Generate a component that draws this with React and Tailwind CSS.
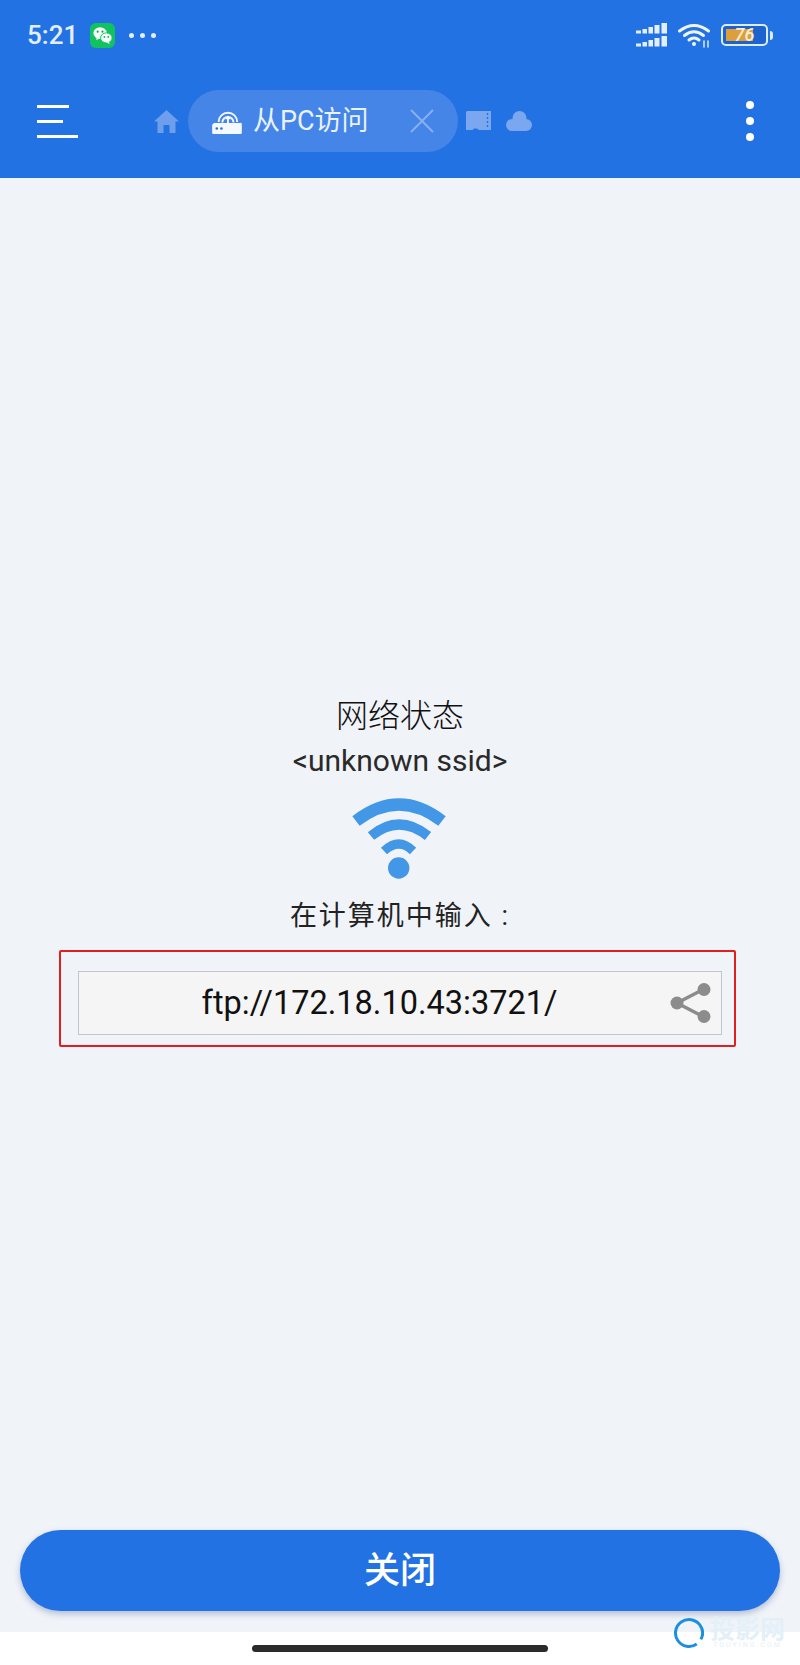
import React from 'react';

const CJK = 'font-["Roboto","Noto_Sans_CJK_SC",sans-serif]';

const WeChatIcon = () => (
    <svg width="25" height="25" viewBox="0 0 26 26">
        <rect width="26" height="26" rx="6" fill="#12c15f" />
        <ellipse cx="10.5" cy="10.5" rx="7" ry="6" fill="#f4fff8" />
        <path d="M7 14.5 L6.5 18 L10.5 15.5 Z" fill="#f4fff8" />
        <ellipse cx="17" cy="15.5" rx="6" ry="5.2" fill="#f4fff8" stroke="#12c15f" strokeWidth="1" />
        <path d="M19.5 19 L20.5 22 L17 20 Z" fill="#f4fff8" />
        <circle cx="8" cy="9" r="1.1" fill="#12a555" />
        <circle cx="13" cy="9" r="1.1" fill="#12a555" />
        <circle cx="15" cy="14.5" r="0.9" fill="#12a555" />
        <circle cx="19" cy="14.5" r="0.9" fill="#12a555" />
    </svg>
);

const SignalBars = () => (
    <svg width="31" height="24" viewBox="0 0 31 24" fill="#e3effe">
        {[0, 1].map((row) => (
            <g key={row} transform={`translate(0 ${row * 13})`}>
                <rect x="0" y="7.5" width="5" height="3" />
                <rect x="6.5" y="6" width="4.5" height="4.5" />
                <rect x="12.5" y="4" width="4.5" height="6.5" />
                <rect x="18.5" y="2" width="5" height="8.5" />
                <rect x="25.5" y="0" width="5.5" height="10.5" />
            </g>
        ))}
    </svg>
);

const StatusWifi = () => (
    <svg width="33" height="25" viewBox="0 0 33 25" fill="none" stroke="#eef5ff" strokeWidth="3" strokeLinecap="round">
        <path d="M1.5 8 Q16 -3 30.5 8" />
        <path d="M6.5 12.5 Q16 5 25.5 12.5" />
        <path d="M11 17 Q16 13 21 17" />
        <circle cx="16" cy="21" r="2" fill="#eef5ff" stroke="none" />
        <path d="M26 18 V24 M30 18 V24" strokeWidth="1.5" stroke="#dbeafe" />
    </svg>
);

const Battery = () => (
    <div className="flex items-center gap-[2px]">
        <div className="relative w-[47px] h-[22px] rounded-[5px] border-[2px] border-[#dcecff] p-[3px] bg-[#1c63cf]">
            <div className="h-full w-[27px] bg-[#dc9f3c]" />
            <span className="absolute inset-0 flex items-center justify-center text-[18px] leading-none font-medium italic text-[#fbeecb] font-['Roboto',sans-serif]">76</span>
        </div>
        <div className="w-[3px] h-[9px] rounded-r-sm bg-[#dcecff]" />
    </div>
);

const HomeIcon = () => (
    <svg width="25" height="25" viewBox="0 0 25 25" fill="#6f9fec">
        <path d="M12.5 1 L25 12.5 L21.5 12.5 L21.5 24 L15.5 24 L15.5 16 L9.5 16 L9.5 24 L3.5 24 L3.5 12.5 L0 12.5 Z" />
    </svg>
);

const RouterIcon = () => (
    <svg width="30" height="25" viewBox="0 0 32 27">
        <g fill="none" stroke="#f4f8ff" strokeWidth="2">
            <path d="M7 14 A10 10 0 0 1 27 14" />
            <path d="M11 14.5 A6 6 0 0 1 23 14.5" />
        </g>
        <path d="M17 7 L20 11 L18 11 L18 15 L16 15 L16 11 L14 11 Z" fill="#f4f8ff" />
        <path d="M2 15 H30 A1.5 1.5 0 0 1 32 17 V26 A1 1 0 0 1 31 27 H1 A1 1 0 0 1 0 26 V17 Z" fill="#f4f8ff" />
        <circle cx="5" cy="21" r="1.4" fill="#2a6fd8" />
        <circle cx="10" cy="21" r="1.4" fill="#2a6fd8" />
    </svg>
);

const SdIcon = () => (
    <svg width="25" height="20" viewBox="0 0 25 20" fill="#7aa7ef">
        <path d="M1 0 H25 V19 H13 L11 17.5 H8 L6.5 19 H0 V1 Z" />
        <path d="M21.5 2 V17" stroke="#2272e4" strokeWidth="1.4" strokeDasharray="2 2" />
    </svg>
);

const CloudIcon = () => (
    <svg width="26" height="20" viewBox="0 0 26 20" fill="#7aa7ef">
        <circle cx="13.5" cy="7" r="7" />
        <circle cx="6" cy="14" r="6" />
        <circle cx="20" cy="14" r="6" />
        <rect x="6" y="12" width="14" height="8" />
    </svg>
);

const BigWifi = () => (
    <svg width="94" height="82" viewBox="0 0 94 82" fill="none" stroke="#4297e6" strokeLinecap="butt">
        <path d="M4 24 Q47 -9 90 24" strokeWidth="12" />
        <path d="M19 39 Q47 16 76 39" strokeWidth="10" />
        <path d="M32 54 Q47 40 61 54" strokeWidth="9" />
        <circle cx="46.7" cy="71" r="10.7" fill="#4297e6" stroke="none" />
    </svg>
);

const ShareIcon = () => (
    <svg width="42" height="40" viewBox="0 0 42 40" fill="#8c8c8c" stroke="#8c8c8c">
        <path d="M7 20 L34 6 M7 20 L34 34" strokeWidth="3.5" fill="none" />
        <circle cx="7" cy="20" r="6.5" stroke="none" />
        <circle cx="34" cy="6.5" r="6.5" stroke="none" />
        <circle cx="34" cy="33.5" r="6.5" stroke="none" />
    </svg>
);

const WatermarkRing = () => (
    <svg width="30" height="32" viewBox="0 0 30 32" fill="none" stroke="#1c8fe0" strokeWidth="3">
        <circle cx="15" cy="16" r="13.5" strokeDasharray="78 7" transform="rotate(55 15 16)" />
    </svg>
);

const App = () => {
    return (
        <div className={`w-[800px] h-[1665px] flex flex-col relative overflow-hidden bg-white ${CJK}`}>
            <header className="h-[178px] shrink-0 bg-[#2272e4] flex flex-col">
                {/* status bar */}
                <div className="h-[68px] flex items-center pl-[27px] pr-[27px] pt-[2px]">
                    <span className="text-[26px] leading-none font-medium text-[#e3eefe] font-['Roboto',sans-serif]">5:21</span>
                    <div className="ml-[12px] h-[25px]"><WeChatIcon /></div>
                    <div className="ml-[14px] flex gap-[6px]">
                        <span className="w-[5px] h-[5px] rounded-full bg-[#e3eefe]" />
                        <span className="w-[5px] h-[5px] rounded-full bg-[#e3eefe]" />
                        <span className="w-[5px] h-[5px] rounded-full bg-[#e3eefe]" />
                    </div>
                    <div className="ml-auto flex items-center gap-[10px]">
                        <div className="mr-[1px]"><SignalBars /></div>
                        <StatusWifi />
                        <Battery />
                    </div>
                </div>
                {/* tab row */}
                <div className="flex items-center h-[62px] mt-[22px] pl-[37px]">
                    <div className="w-[41px] flex flex-col gap-[12px]">
                        <div className="w-[32px] h-[3px] bg-white" />
                        <div className="w-[26px] h-[3px] bg-white" />
                        <div className="w-[41px] h-[3px] bg-white" />
                    </div>
                    <div className="ml-[76px]"><HomeIcon /></div>
                    <div className="ml-[9px] w-[270px] h-[62px] rounded-full bg-[#4585e8] flex items-center pl-[24px]">
                        <RouterIcon />
                        <span className="ml-[11px] text-[27px] leading-none text-[#eaf2ff]">从PC访问</span>
                        <svg className="ml-[41px]" width="24" height="24" viewBox="0 0 24 24" stroke="#88b0f0" strokeWidth="2" fill="none">
                            <path d="M1 1 L23 23 M23 1 L1 23" />
                        </svg>
                    </div>
                    <div className="ml-[8px]"><SdIcon /></div>
                    <div className="ml-[15px]"><CloudIcon /></div>
                    <div className="ml-[214px] flex flex-col gap-[8px]">
                        <span className="w-[8px] h-[8px] rounded-full bg-white" />
                        <span className="w-[8px] h-[8px] rounded-full bg-white" />
                        <span className="w-[8px] h-[8px] rounded-full bg-white" />
                    </div>
                </div>
            </header>

            <main className="flex-1 bg-[#f0f3f8] flex flex-col items-center pt-[519px]">
                <h1 className="text-[32px] leading-[38px] font-light text-[#111]">网络状态</h1>
                <p className="mt-[9px] text-[30px] leading-[34px] text-[#2a2a2a]">&lt;unknown ssid&gt;</p>
                <div className="mt-[19px] mr-[2px] h-[82px]"><BigWifi /></div>
                <p className="mt-[20px] text-[27px] leading-[34px] text-[#222] tracking-[2px]">在计算机中输入 :</p>
                <div className="mt-[17px] self-start ml-[59px] w-[677px] h-[97px] border-[2px] border-[#e01f1f] rounded-[2px] pt-[19px] pl-[17px]">
                    <div className="relative w-[644px] h-[64px] bg-[#f5f5f6] border border-[#c3c6cb] flex items-center justify-center pr-[41px]">
                        <span className="text-[32.5px] leading-none text-[#111]">ftp://172.18.10.43:3721/</span>
                        <div className="absolute right-[9px] top-[11px]"><ShareIcon /></div>
                    </div>
                </div>
                <button className="mt-auto mb-[21px] w-[760px] h-[81px] rounded-full bg-[#2272e4] shadow-[0_3px_6px_rgba(60,90,150,0.35)] text-white text-[36px] font-medium flex items-center justify-center">
                    关闭
                </button>
            </main>

            {/* home indicator */}
            <div className="h-[33px] shrink-0 bg-white flex justify-center pt-[13px]">
                <div className="w-[296px] h-[7px] rounded-full bg-[#2b2b2b]" />
            </div>

            {/* watermark */}
            <div className="absolute left-[674px] top-[1617px] flex items-center gap-[6px]">
                <WatermarkRing />
                <div className="flex flex-col items-center">
                    <span className="text-[25px] leading-[25px] font-bold text-[#e4f0f8]">投影网</span>
                    <span className="text-[7px] leading-[7px] tracking-[2px] text-[#e4f0f8]">TOUYING.COM</span>
                </div>
            </div>
        </div>
    );
};

export default App;
